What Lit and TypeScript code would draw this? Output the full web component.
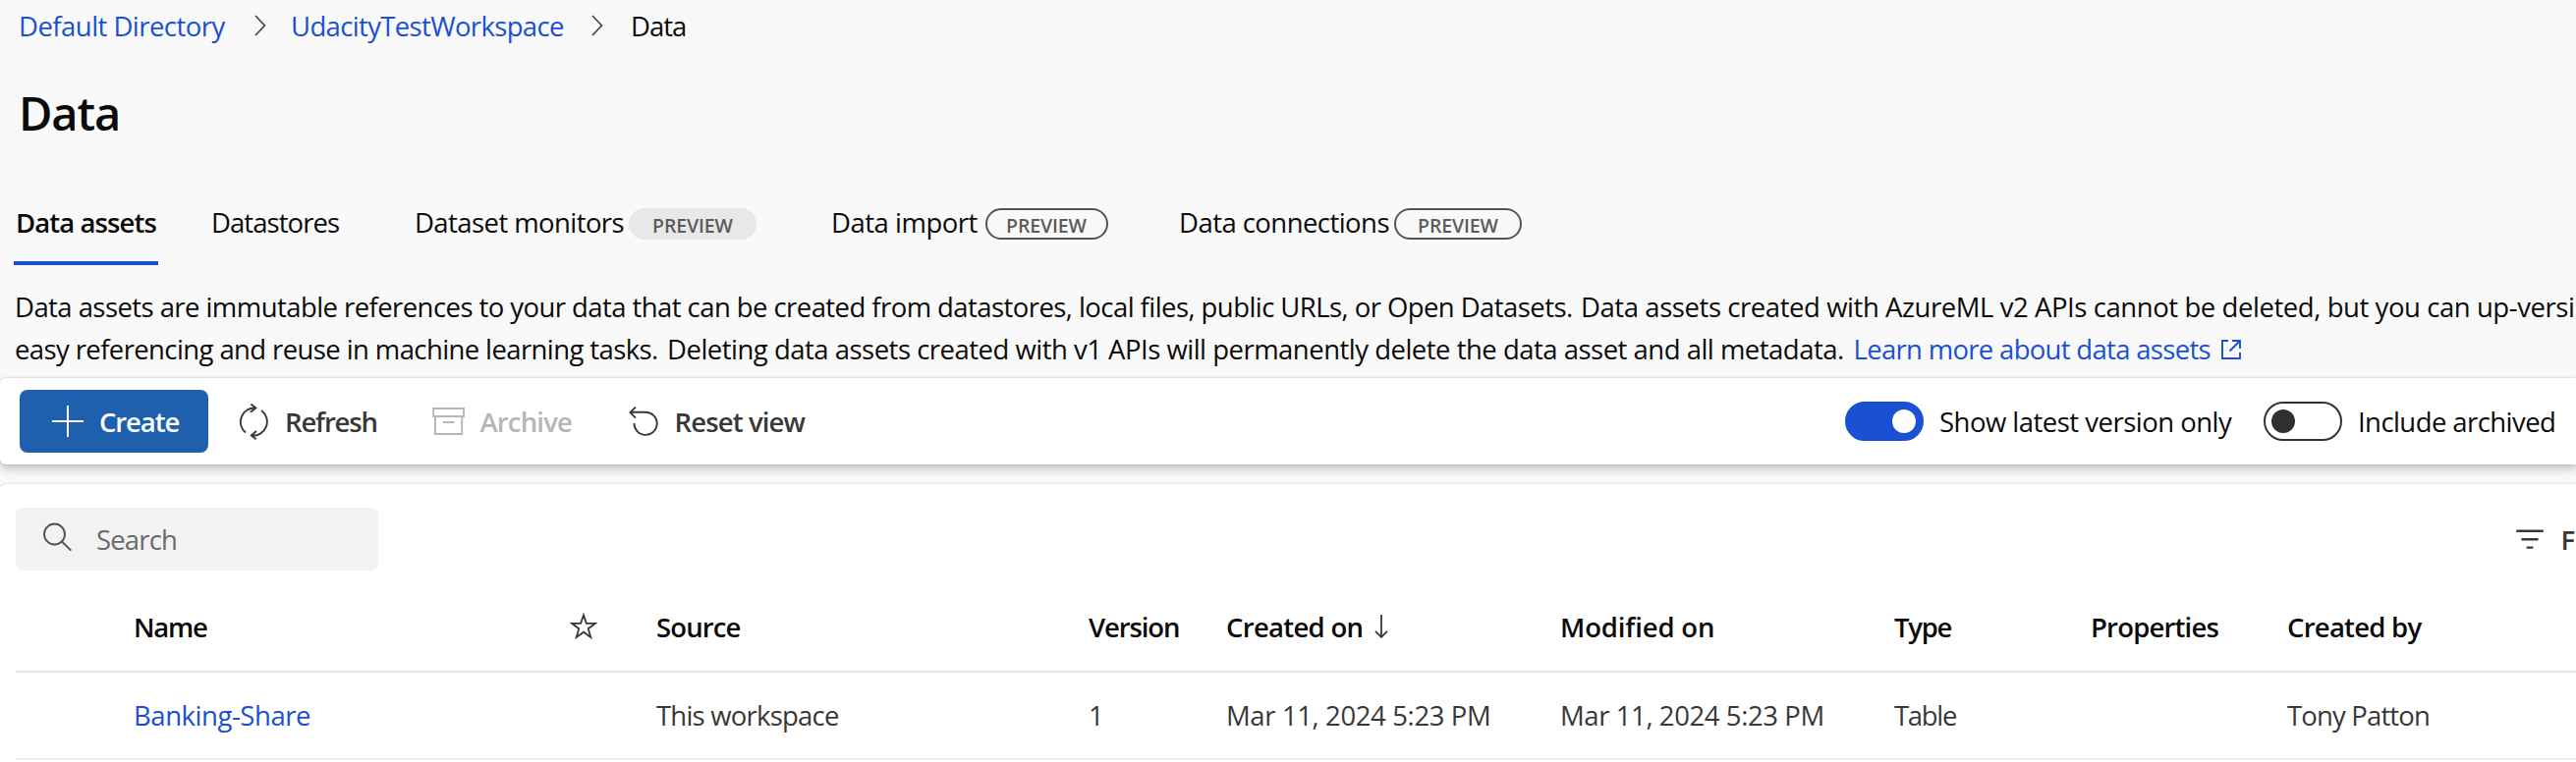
import { LitElement, html, css, svg } from "lit";
import { customElement, property } from "lit/decorators.js";
import { styleMap } from "lit/directives/style-map.js";

const FAMILY = '"Open Sans", "Noto Sans", sans-serif';
const pen = document.createElement("canvas").getContext("2d")!;

/** Tracking that sets the inked part of a label to the given width. */
function tracking(text: string, width: number, size: number, weight: number): string {
  pen.font = `${weight} ${size}px ${FAMILY}`;
  const m = pen.measureText(text);
  const ink = m.actualBoundingBoxLeft + m.actualBoundingBoxRight;
  return `${((width - ink) / Math.max(1, text.length - 1)).toFixed(3)}px`;
}

@customElement("fit-label")
class FitLabel extends LitElement {
  static styles = css`
    :host { display: inline-block; white-space: pre; }
    .label { font-kerning: normal; }
  `;
  @property() text = "";
  @property({ type: Number }) ink = 0;
  @property({ type: Number }) size = 27.5;
  @property({ type: Number }) weight = 400;
  render() {
    const s = {
      letterSpacing: tracking(this.text, this.ink, this.size, this.weight),
      fontSize: `${this.size}px`,
      fontWeight: String(this.weight),
    };
    return html`<span class="label" style=${styleMap(s)}>${this.text}</span>`;
  }
}

const label = (text: string, ink: number, weight = 400, size = 27.5) =>
  html`<fit-label .text=${text} .ink=${ink} .weight=${weight} .size=${size}></fit-label>`;

const chevron = html`<svg class="chev" width="12" height="22" viewBox="0 0 12 22"><path d="M1 1 10.5 11 1 21" /></svg>`;

const icons = {
  plus: svg`<svg width="32" height="32" viewBox="0 0 32 32"><path d="M16 0V32M0 16H32" stroke-width="2"/></svg>`,
  refresh: svg`<svg width="32" height="38" viewBox="0 0 32 38"><path d="M8 30.6A14.2 14.2 0 0 1 18.2 5.5M13.4 1.6 18.4 5.6 13 9.8M24 8A14.2 14.2 0 0 1 14 33.6M19 29 13.8 33.4 18.6 37.2"/></svg>`,
  archive: svg`<svg width="34" height="30" viewBox="0 0 34 30"><path d="M1.2 2H32V10H1.2ZM3 10V28H30.2V10M11 16H22.5"/></svg>`,
  reset: svg`<svg width="30" height="30" viewBox="0 0 30 30"><path d="M5.5 17A11.6 11.6 0 1 0 17 5.7H1.2M7 .6 1.4 5.9 7 11.6"/></svg>`,
  search: svg`<svg width="30" height="30" viewBox="0 0 30 30"><circle cx="11.5" cy="12" r="10.5"/><path d="M19 19.5 28.3 28.6"/></svg>`,
  filter: svg`<svg width="28" height="20" viewBox="0 0 28 20"><path d="M1.2 1.8H26.8M6.4 10.2H21.6M11.6 18.6H16.4" stroke-width="2.4" stroke-linecap="round"/></svg>`,
  star: svg`<svg width="28" height="28" viewBox="0 0 28 28"><path d="M14 2.4 16.9 10.9H25.8L18.7 16.2 21.3 24.9 14 19.7 6.7 24.9 9.3 16.2 2.2 10.9H11.1Z"/></svg>`,
  down: svg`<svg width="14" height="24" viewBox="0 0 14 24"><path d="M7 0V22.6M1 16.8 7 22.8 13 16.8"/></svg>`,
  external: svg`<svg width="22" height="22" viewBox="0 0 22 22"><path d="M8 2H2V20H20V14M12 2H20V10M20 2 9.5 12.5"/></svg>`,
};

const tabs = [
  { text: "Data assets", ink: 141.5, active: true },
  { text: "Datastores", ink: 128 },
  { text: "Dataset monitors", ink: 210.5, box: 219, badge: "filled" },
  { text: "Data import", ink: 147.5, box: 157.5, badge: "narrow" },
  { text: "Data connections", ink: 211.4, box: 220, badge: "wide" },
];

const columns: [string, number, string, number][] = [
  ["Name", 73, "Banking-Share", 177],
  ["", 0, "", 0],
  ["Source", 84.5, "This workspace", 185],
  ["Version", 92, "1", 8],
  ["Created on", 137.5, "Mar 11, 2024 5:23 PM", 266],
  ["Modified on", 154, "Mar 11, 2024 5:23 PM", 265.5],
  ["Type", 58.5, "Table", 63],
  ["Properties", 128.5, "", 0],
  ["Created by", 136.5, "Tony Patton", 144],
];

@customElement("app-root")
class AppRoot extends LitElement {
  static styles = css`
    :host {
      display: block; width: 2622px; height: 776px; overflow: hidden;
      background: #f9f9f9; color: #0b0b0b;
      font: 27.5px "Open Sans", "Noto Sans", sans-serif;
    }
    * { box-sizing: border-box; }
    svg { display: block; fill: none; stroke: currentColor; stroke-width: 1.9; flex: none; }
    .crumbs { display: flex; align-items: center; height: 52px; padding-left: 19px; line-height: 52px; }
    .crumbs .item { flex: none; padding-top: 1px; }
    .first { width: 240px; }
    .second { width: 306px; }
    .chev { stroke: #444; stroke-width: 1.7; }
    .gap-a { width: 25px; }
    .gap-b { width: 28px; }
    .link { color: #1a50d2; }
    h1 { margin: 0; padding-left: 19px; height: 125px; line-height: 119px; font-weight: 600; }
    .tabs { display: grid; grid-template-columns: 199px 207px 424px 354px auto; padding-left: 14px; }
    .tab { display: flex; align-items: center; justify-self: start; height: 93px; padding: 10px 0 0 2px; border-bottom: 4px solid transparent; line-height: 40px; }
    .active { width: 147px; border-bottom-color: #1a50d2; }
    .badge {
      display: flex; align-items: center; justify-content: center; margin-top: 3px;
      height: 32px; line-height: 27px; border-radius: 16px; border: 2px solid #555; color: #5c5c5c;
    }
    .filled { width: 130px; background: #e8e8e8; border-color: #e8e8e8; }
    .narrow { width: 125px; }
    .wide { width: 130px; }
    .about { height: 115px; padding: 21px 0 0 15px; line-height: 43px; white-space: nowrap; }
    .line { display: flex; height: 43px; }
    .intro { width: 1594px; flex: none; }
    .reuse { width: 664px; flex: none; }
    .delete { width: 1207.5px; flex: none; }
    .more { display: flex; color: #1a50d2; }
    .more svg { margin: 11px 0 0 10px; stroke-width: 1.9; }
    .bar {
      display: flex; align-items: center; height: 88px; background: #fff; border-radius: 6px 0 0 6px;
      padding: 0 0 0 20px; color: #383838; line-height: 40px;
      box-shadow: 0 0 3px rgba(0, 0, 0, .2), 0 5px 10px rgba(0, 0, 0, .2);
    }
    .create { display: flex; align-items: center; width: 192px; height: 64px; background: #1e60ae; color: #fff; border-radius: 8px; padding-left: 33px; gap: 16px; }
    .cmd { display: flex; align-items: center; }
    .txt { margin-top: 1px; }
    .cmd.refresh { margin-left: 29.5px; gap: 16.5px; width: 198px; }
    .cmd.archive { gap: 15px; width: 200.5px; color: #b6b6b6; }
    .cmd.reset { gap: 16.5px; }
    .switches { display: flex; align-items: center; margin-left: auto; padding-right: 20px; color: #0b0b0b; }
    .switch { width: 80px; height: 40px; border: 2px solid #333; border-radius: 20px; display: flex; align-items: center; padding: 0 6px; }
    .knob { width: 24px; height: 24px; border-radius: 12px; background: #303030; }
    .on { background: #1a50d2; border-color: #1a50d2; justify-content: flex-end; }
    .on .knob { background: #fff; }
    .s1 { width: 330px; margin-left: 16px; }
    .s2 { width: 202px; margin-left: 16px; }
    .panel { margin-top: 20px; height: 300px; background: #fff; border-radius: 6px 0 0 0; box-shadow: 0 0 3px rgba(0, 0, 0, .2); }
    .tools { display: flex; justify-content: space-between; align-items: center; padding: 24px 0 0 16px; line-height: 40px; }
    .search { display: flex; align-items: center; width: 369px; height: 64px; border-radius: 8px; background: #f2f2f2; color: #6a6a6a; padding-left: 27.5px; gap: 24.5px; }
    .search svg { color: #505050; margin-top: -4px; }
    .filter { display: flex; align-items: center; width: 61px; gap: 17.5px; overflow: hidden; white-space: nowrap; color: #383838; }
    .grid { margin-left: 16px; padding-top: 14px; }
    .row {
      display: grid; grid-template-columns: 444px 88px 440px 140px 340px 340px 200px 200px 1fr;
      align-items: center; padding-left: 120px; height: 89px; color: #383838;
      border-bottom: 2px solid #f0f0f0; line-height: 86px; white-space: nowrap;
    }
    .head { height: 90px; border-bottom-color: #e6e6e6; line-height: 88px; color: #0b0b0b; }
    .cell { display: flex; align-items: center; gap: 12px; }
    .cell svg { color: #383838; margin-top: -2px; stroke-width: 1.8; }
  `;

  private header(name: string, ink: number) {
    return html`<div class="cell">${name ? label(name, ink, 600) : icons.star}${name === "Created on" ? icons.down : ""}</div>`;
  }

  render() {
    return html`
      <nav class="crumbs">
        <span class="item first link">${label("Default Directory", 208.5)}</span>${chevron}
        <span class="gap-a"></span>
        <span class="item second link">${label("UdacityTestWorkspace", 275)}</span>${chevron}
        <span class="gap-b"></span>
        <span class="item">${label("Data", 54)}</span>
      </nav>
      <h1>${label("Data", 97, 600, 47)}</h1>
      <div class="tabs">
        ${tabs.map((t) => html`
          <div class="tab ${t.active ? "active" : ""}">
            <span style=${styleMap(t.box ? { width: `${t.box - 1}px` } : {})}>${label(t.text, t.ink, t.active ? 600 : 400)}</span>
            ${t.badge ? html`<span class="badge ${t.badge}">${label("PREVIEW", 81.5, 600, 19.5)}</span>` : ""}
          </div>`)}
      </div>
      <div class="about">
        <div class="line">
          <span class="intro">${label("Data assets are immutable references to your data that can be created from datastores, local files, public URLs, or Open Datasets.", 1583)}</span>
          <span>${label("Data assets created with AzureML v2 APIs cannot be deleted, but you can up-versi", 1008)}</span>
        </div>
        <div class="line">
          <span class="reuse">${label("easy referencing and reuse in machine learning tasks.", 653)}</span>
          <span class="delete">${label("Deleting data assets created with v1 APIs will permanently delete the data asset and all metadata.", 1195)}</span>
          <span class="more">${label("Learn more about data assets", 361)}${icons.external}</span>
        </div>
      </div>
      <div class="bar">
        <div class="create">${icons.plus}<span class="txt">${label("Create", 80.5, 600)}</span></div>
        <div class="cmd refresh">${icons.refresh}<span class="txt">${label("Refresh", 91.5, 600)}</span></div>
        <div class="cmd archive">${icons.archive}<span class="txt">${label("Archive", 93.5, 600)}</span></div>
        <div class="cmd reset">${icons.reset}<span class="txt">${label("Reset view", 132, 600)}</span></div>
        <div class="switches">
          <span class="switch on"><span class="knob"></span></span><span class="txt s1">${label("Show latest version only", 297)}</span>
          <span class="switch"><span class="knob"></span></span><span class="txt s2">${label("Include archived", 198)}</span>
        </div>
      </div>
      <div class="panel">
        <div class="tools">
          <div class="search">${icons.search}<span class="txt">${label("Search", 80)}</span></div>
          <div class="filter">${icons.filter}<span class="txt">${label("Filter", 66, 600)}</span></div>
        </div>
        <div class="grid">
          <div class="row head">${columns.map((c) => this.header(c[0], c[1]))}</div>
          <div class="row">${columns.map((c, i) => html`<div class="cell ${i === 0 ? "link" : ""}">${c[2] ? label(c[2], c[3]) : ""}</div>`)}</div>
        </div>
      </div>`;
  }
}
